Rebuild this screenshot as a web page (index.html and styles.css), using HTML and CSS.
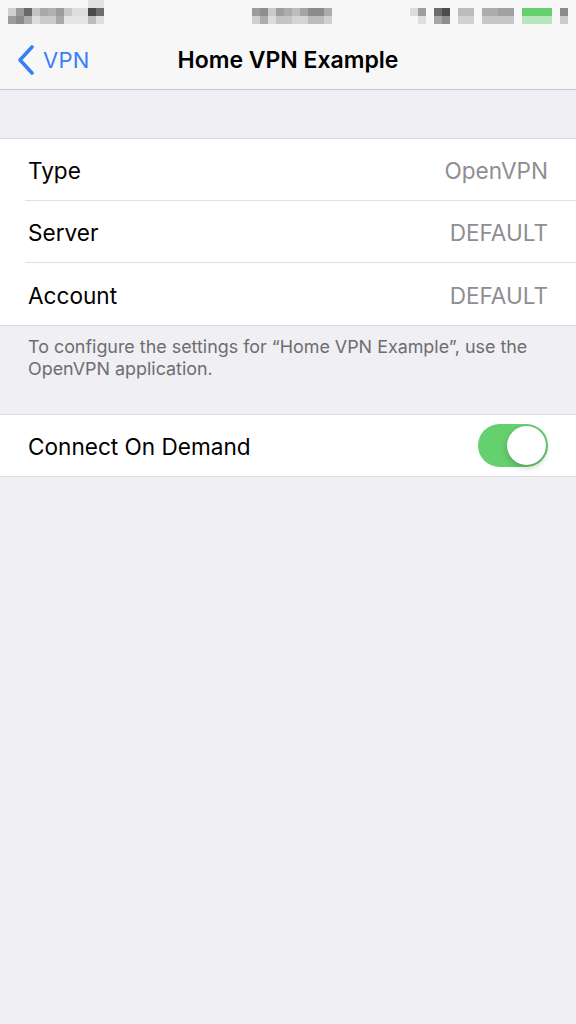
FILE: index.html
```html
<!DOCTYPE html>
<html>
<head>
<meta charset="utf-8">
<link rel="stylesheet" href="styles.css">
</head>
<body>
<header class="topbar">
  <div class="statusbar">
    <svg class="pix" width="576" height="30" viewBox="0 0 576 30">
      <g class="blocks">
        <rect x="8" y="8" width="8" height="8" fill="#cfcfd1"/>
        <rect x="16" y="8" width="8" height="8" fill="#9a9a9c"/>
        <rect x="24" y="8" width="8" height="8" fill="#6a6a6c"/>
        <rect x="32" y="8" width="8" height="8" fill="#c2c2c4"/>
        <rect x="40" y="8" width="8" height="8" fill="#a8a8aa"/>
        <rect x="48" y="8" width="8" height="8" fill="#b0b0b2"/>
        <rect x="56" y="8" width="8" height="8" fill="#9c9c9e"/>
        <rect x="64" y="8" width="8" height="8" fill="#c8c8ca"/>
        <rect x="72" y="8" width="16" height="8" fill="#dedee0"/>
        <rect x="88" y="8" width="8" height="8" fill="#4a4a4c"/>
        <rect x="96" y="8" width="8" height="8" fill="#6c6c6e"/>
        <rect x="88" y="0" width="16" height="8" fill="#e2e2e4"/>
        <rect x="8" y="16" width="8" height="8" fill="#9c9c9e"/>
        <rect x="16" y="16" width="8" height="8" fill="#8c8c8e"/>
        <rect x="24" y="16" width="8" height="8" fill="#acacae"/>
        <rect x="32" y="16" width="8" height="8" fill="#dcdcde"/>
        <rect x="40" y="16" width="16" height="8" fill="#cacacc"/>
        <rect x="56" y="16" width="8" height="8" fill="#a8a8aa"/>
        <rect x="64" y="16" width="24" height="8" fill="#e4e4e6"/>
        <rect x="88" y="16" width="8" height="8" fill="#bcbcbe"/>
        <rect x="96" y="16" width="8" height="8" fill="#dedee0"/>

        <rect x="252" y="8" width="8" height="8" fill="#9c9c9e"/>
        <rect x="260" y="8" width="8" height="8" fill="#8e8e90"/>
        <rect x="268" y="8" width="8" height="8" fill="#cacacc"/>
        <rect x="276" y="8" width="8" height="8" fill="#9e9ea0"/>
        <rect x="284" y="8" width="8" height="8" fill="#acacae"/>
        <rect x="292" y="8" width="8" height="8" fill="#bdbdbf"/>
        <rect x="300" y="8" width="8" height="8" fill="#a4a4a6"/>
        <rect x="308" y="8" width="16" height="8" fill="#8c8c8e"/>
        <rect x="324" y="8" width="8" height="8" fill="#acacae"/>
        <rect x="252" y="16" width="8" height="8" fill="#cfcfd1"/>
        <rect x="260" y="16" width="8" height="8" fill="#acacae"/>
        <rect x="268" y="16" width="8" height="8" fill="#dcdcde"/>
        <rect x="276" y="16" width="16" height="8" fill="#c4c4c6"/>
        <rect x="292" y="16" width="16" height="8" fill="#d4d4d6"/>
        <rect x="308" y="16" width="16" height="8" fill="#bcbcbe"/>
        <rect x="324" y="16" width="8" height="8" fill="#d0d0d2"/>

        <rect x="410" y="8" width="8" height="8" fill="#dcdcde"/>
        <rect x="418" y="8" width="8" height="8" fill="#9e9ea0"/>
        <rect x="434" y="8" width="8" height="8" fill="#6c6c6e"/>
        <rect x="442" y="8" width="8" height="8" fill="#4c4c4e"/>
        <rect x="458" y="8" width="16" height="8" fill="#bcbcbe"/>
        <rect x="482" y="8" width="16" height="8" fill="#acacae"/>
        <rect x="498" y="8" width="16" height="8" fill="#a0a0a2"/>
        <rect x="522" y="8" width="30" height="8" fill="#67d06e"/>
        <rect x="560" y="8" width="8" height="8" fill="#8c8c8e"/>
        <rect x="418" y="16" width="8" height="8" fill="#dedee0"/>
        <rect x="434" y="16" width="8" height="8" fill="#a6a6a8"/>
        <rect x="442" y="16" width="8" height="8" fill="#8e8e90"/>
        <rect x="458" y="16" width="16" height="8" fill="#d2d2d4"/>
        <rect x="482" y="16" width="32" height="8" fill="#c6c6c8"/>
        <rect x="522" y="16" width="30" height="8" fill="#b8e6bc"/>
        <rect x="560" y="16" width="8" height="8" fill="#cacacc"/>
      </g>
    </svg>
  </div>
  <nav class="navbar">
    <a class="back">
      <svg class="chev" width="18" height="30" viewBox="0 0 18 30"><path d="M15 2 L3 15 L15 28" fill="none" stroke="#3a7ff6" stroke-width="3.6" stroke-linecap="round" stroke-linejoin="round"/></svg>
      <span>VPN</span>
    </a>
    <h1 class="title">Home VPN Example</h1>
  </nav>
</header>

<main class="content">
  <section class="group first">
    <div class="row"><div class="row-inner"><span class="label">Type</span><span class="value">OpenVPN</span></div></div>
    <div class="row"><div class="row-inner"><span class="label">Server</span><span class="value">DEFAULT</span></div></div>
    <div class="row"><div class="row-inner"><span class="label">Account</span><span class="value">DEFAULT</span></div></div>
  </section>
  <p class="footer">To configure the settings for “Home VPN Example”, use the OpenVPN application.</p>
  <section class="group">
    <div class="row"><div class="row-inner"><span class="label">Connect On Demand</span><span class="toggle on"><span class="knob"></span></span></div></div>
  </section>
</main>
</body>
</html>
```

FILE: styles.css
```css
html, body {
  margin: 0;
  padding: 0;
}
body {
  width: 576px;
  min-height: 1024px;
  background: #efeff4;
  font-family: Inter, "Noto Sans", "Liberation Sans", sans-serif;
  color: #000;
}
.topbar {
  background: #f7f7f8;
  border-bottom: 1px solid #c9c9cd;
  height: 89px;
}
.statusbar {
  height: 30px;
}
.pix {
  display: block;
}
.blocks {
  filter: blur(0.6px);
}
.navbar {
  position: relative;
  height: 59px;
  display: flex;
  align-items: center;
}
.back {
  display: flex;
  align-items: center;
  gap: 8px;
  padding-left: 17px;
  color: #3a7ff6;
  font-size: 22px;
  letter-spacing: 0.3px;
}
.chev {
  display: block;
}
.title {
  position: absolute;
  left: 0;
  right: 0;
  top: 0;
  bottom: 0;
  margin: 0;
  display: flex;
  align-items: center;
  justify-content: center;
  font-size: 23px;
  font-weight: 600;
  pointer-events: none;
}
.content {
  padding-top: 48px;
}
.group {
  background: #fff;
  border-top: 1px solid #dcdce0;
  border-bottom: 1px solid #dcdce0;
}
.row {
  padding-left: 25px;
}
.row-inner {
  height: 61px;
  display: flex;
  align-items: center;
  justify-content: space-between;
  padding-left: 3px;
  padding-right: 28px;
  border-bottom: 1px solid #e0e0e4;
}
.row:last-child .row-inner {
  border-bottom: none;
  height: 61px;
}
.first .row:last-child .row-inner {
  height: 62px;
}
.label {
  font-size: 22.6px;
  padding-top: 2px;
}
.value {
  font-size: 22.6px;
  padding-top: 2px;
  color: #8e8e93;
}
.footer {
  margin: 0;
  padding: 10px 40px 34px 28px;
  font-size: 17.9px;
  line-height: 22px;
  color: #6d6d72;
}
.toggle {
  width: 70px;
  height: 43px;
  border-radius: 22px;
  background: #65d06e;
  position: relative;
  box-sizing: border-box;
}
.knob {
  position: absolute;
  right: 2px;
  top: 2px;
  width: 39px;
  height: 39px;
  border-radius: 50%;
  background: #fff;
  box-shadow: 0 3px 6px rgba(0,0,0,0.2), 0 0 1px rgba(0,0,0,0.15);
}
```
